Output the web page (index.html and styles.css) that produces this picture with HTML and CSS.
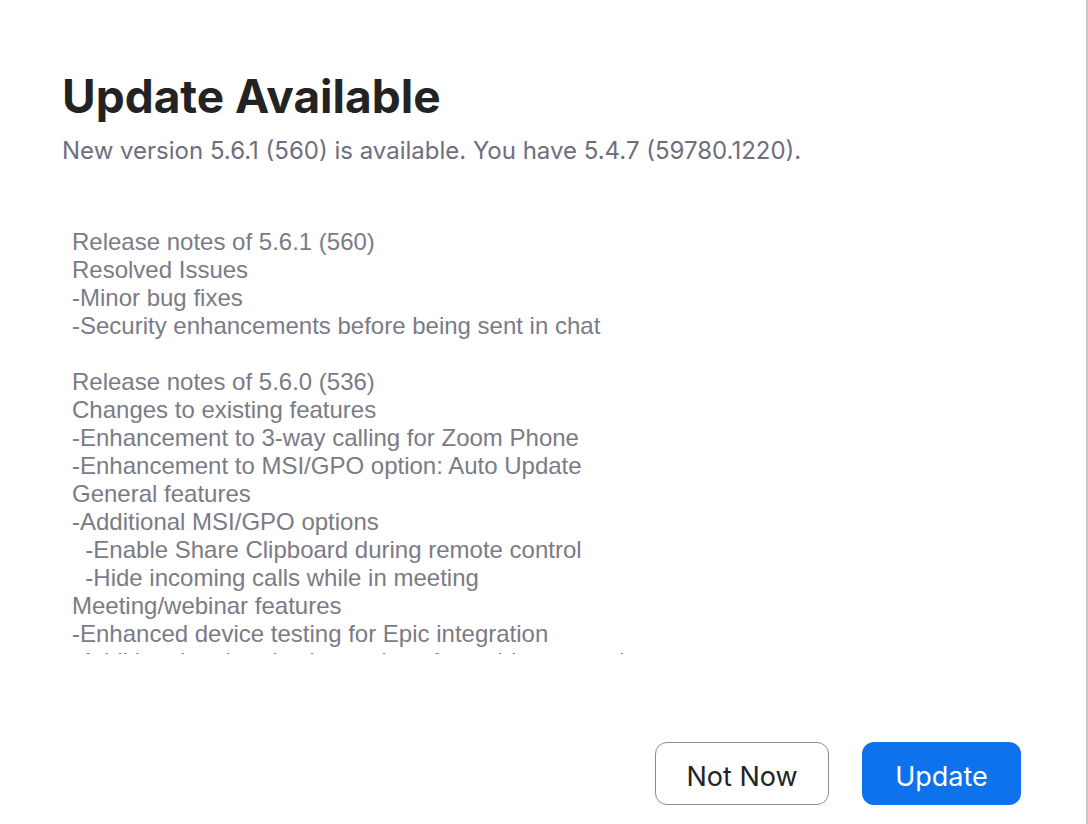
FILE: index.html
```html
<!DOCTYPE html>
<html>
<head>
<meta charset="utf-8">
<link rel="stylesheet" href="styles.css">
</head>
<body>
<div class="window">
  <div class="content">
    <h1 class="title">Update Available</h1>
    <p class="subtitle">New version 5.6.1 (560) is available. You have 5.4.7 (59780.1220).</p>
    <div class="notes">
      <div class="line">Release notes of 5.6.1 (560)</div>
      <div class="line">Resolved Issues</div>
      <div class="line">-Minor bug fixes</div>
      <div class="line">-Security enhancements before being sent in chat</div>
      <div class="line">&nbsp;</div>
      <div class="line">Release notes of 5.6.0 (536)</div>
      <div class="line">Changes to existing features</div>
      <div class="line">-Enhancement to 3-way calling for Zoom Phone</div>
      <div class="line">-Enhancement to MSI/GPO option: Auto Update</div>
      <div class="line">General features</div>
      <div class="line">-Additional MSI/GPO options</div>
      <div class="line">&nbsp;&nbsp;-Enable Share Clipboard during remote control</div>
      <div class="line">&nbsp;&nbsp;-Hide incoming calls while in meeting</div>
      <div class="line">Meeting/webinar features</div>
      <div class="line">-Enhanced device testing for Epic integration</div>
      <div class="line">-Additional authentication options for webinar attendees</div>
      <div class="line">-Alternative hosts for webinars</div>
    </div>
  </div>
  <div class="actions">
    <button class="btn btn-secondary">Not Now</button>
    <button class="btn btn-primary">Update</button>
  </div>
</div>
</body>
</html>
```
FILE: styles.css
```css
html, body {
  margin: 0;
  padding: 0;
  background: #ffffff;
}
.window {
  width: 1086px;
  height: 824px;
  border-right: 2px solid #c9c9c9;
  display: flex;
  flex-direction: column;
}
.content {
  padding: 68px 0 0 62px;
  flex: 1;
  min-height: 0;
}
.title {
  margin: 0;
  font-family: Inter, "Liberation Sans", sans-serif;
  font-weight: 700;
  font-size: 46px;
  line-height: 56px;
  color: #232323;
}
.subtitle {
  margin: 11px 0 0 0;
  font-family: Inter, "Liberation Sans", sans-serif;
  font-size: 24px;
  line-height: 32px;
  color: #6e6e7e;
}
.notes {
  margin: 61px 0 0 10px;
  height: 426px;
  overflow: hidden;
  font-family: "Liberation Sans", Arial, sans-serif;
  font-size: 24px;
  line-height: 28px;
  color: #7b7b86;
}
.line {
  white-space: nowrap;
}
.actions {
  display: flex;
  justify-content: flex-end;
  gap: 33px;
  padding: 0 65px 19px 0;
}
.btn {
  font-family: Inter, "Liberation Sans", sans-serif;
  font-size: 27px;
  height: 63px;
  border-radius: 12px;
  padding: 5px 0 0 0;
  cursor: pointer;
}
.btn-secondary {
  width: 174px;
  background: #ffffff;
  border: 1.5px solid #8c8c8c;
  color: #232323;
}
.btn-primary {
  width: 159px;
  background: #0e72ed;
  border: none;
  color: #ffffff;
}
```
